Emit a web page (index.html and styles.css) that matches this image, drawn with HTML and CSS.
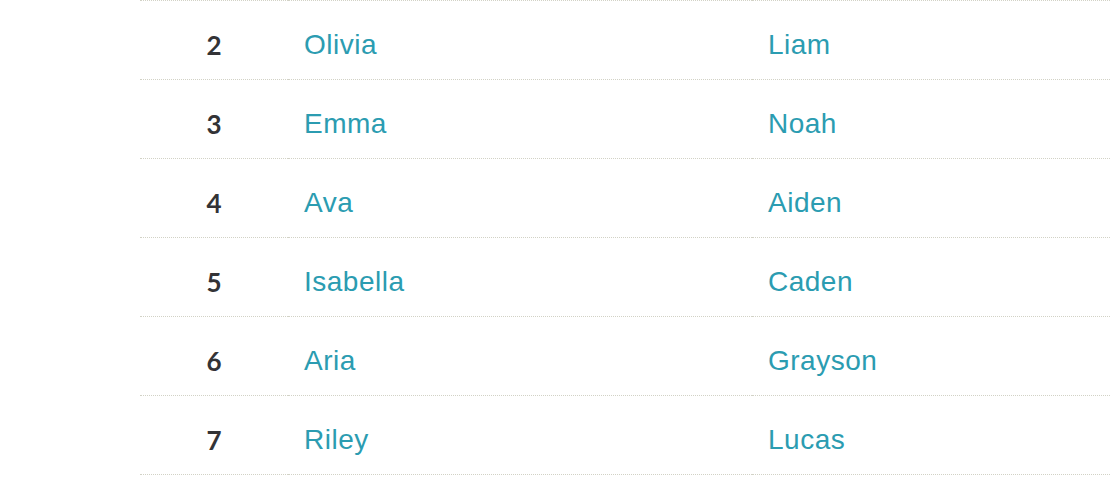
FILE: index.html
```html
<!DOCTYPE html>
<html>
<head>
<meta charset="utf-8">
<link rel="stylesheet" href="styles.css">
</head>
<body>
<table class="names">
  <tbody>
    <tr class="first"><td class="rank">2</td><td class="name">Olivia</td><td class="name">Liam</td></tr>
    <tr><td class="rank">3</td><td class="name">Emma</td><td class="name">Noah</td></tr>
    <tr><td class="rank">4</td><td class="name">Ava</td><td class="name">Aiden</td></tr>
    <tr><td class="rank">5</td><td class="name">Isabella</td><td class="name">Caden</td></tr>
    <tr><td class="rank">6</td><td class="name">Aria</td><td class="name">Grayson</td></tr>
    <tr><td class="rank">7</td><td class="name">Riley</td><td class="name">Lucas</td></tr>
  </tbody>
</table>
</body>
</html>
```
FILE: styles.css
```css
html, body {
  margin: 0;
  padding: 0;
  background: #fff;
  overflow: hidden;
}
.names {
  margin-left: 140px;
  width: 1100px;
  border-collapse: separate;
  border-spacing: 0;
  table-layout: fixed;
}
.names td {
  height: 79px;
  padding: 10px 0 0 0;
  box-sizing: border-box;
  border-bottom: 1px dotted #d2d2c6;
  vertical-align: middle;
}
.names tr.first td {
  border-top: 1px dotted #d2d2c6;
  height: 80px;
}
.names td.rank {
  width: 148px;
  text-align: center;
  font-family: Lato, "Open Sans", sans-serif;
  font-weight: 700;
  font-size: 26px;
  color: #333336;
}
.names td.name {
  width: 464px;
  padding-left: 16px;
  font-family: "Liberation Sans", Arial, sans-serif;
  font-size: 28px;
  letter-spacing: 0.5px;
  color: #2b9cb1;
}
.names td.name:last-child {
  width: auto;
}
```
